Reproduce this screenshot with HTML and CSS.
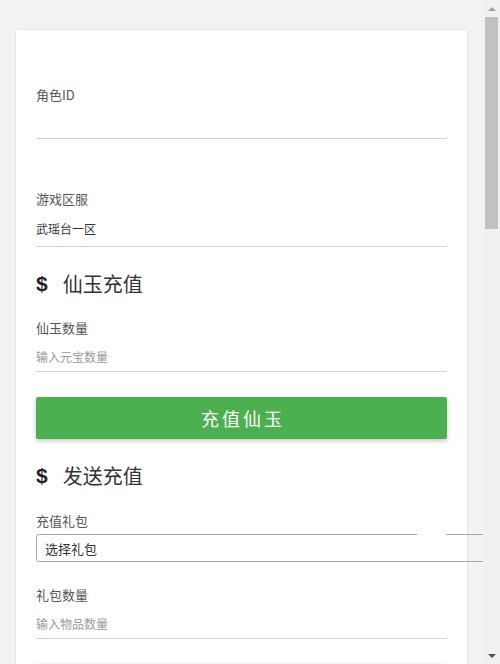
FILE: index.html
```html
<!DOCTYPE html>
<html lang="zh-CN">
<head>
<meta charset="utf-8">
<title>充值</title>
<link rel="stylesheet" href="styles.css">
</head>
<body>
<div class="page">
  <main class="viewport">
    <div class="card">
      <div class="field first">
        <label class="label">角色ID</label>
        <div class="line-input"></div>
      </div>
      <div class="field server">
        <label class="label">游戏区服</label>
        <div class="line-input tall">武瑶台一区</div>
      </div>

      <h2 class="heading"><span class="dollar">$</span>仙玉充值</h2>
      <div class="field jade">
        <label class="label">仙玉数量</label>
        <div class="line-input placeholder">输入元宝数量</div>
      </div>
      <button class="btn">充值仙玉</button>

      <h2 class="heading"><span class="dollar">$</span>发送充值</h2>
      <div class="field gift">
        <label class="label">充值礼包</label>
        <div class="select"><span class="select-text">选择礼包</span><span class="notch"></span></div>
      </div>
      <div class="field gift-count">
        <label class="label">礼包数量</label>
        <div class="line-input placeholder">输入物品数量</div>
      </div>
      <div class="btn btn-next"></div>
    </div>
  </main>
  <div class="scrollbar">
    <div class="sb-btn"><span class="arrow-up"></span></div>
    <div class="sb-thumb"></div>
    <div class="sb-track"></div>
    <div class="sb-btn"><span class="arrow-down"></span></div>
  </div>
</div>
</body>
</html>
```
FILE: styles.css
```css
html, body {
  margin: 0;
  padding: 0;
  height: 664px;
  overflow: hidden;
}
body {
  background: #f2f2f2;
  font-family: "Noto Sans CJK SC", "Noto Sans", sans-serif;
  color: #333;
}
.page {
  display: flex;
  height: 664px;
}
.viewport {
  width: 483px;
  height: 664px;
  overflow: hidden;
  padding: 30px 16px 0 16px;
  box-sizing: border-box;
}
.card {
  background: #fff;
  box-shadow: 0 0 2px rgba(0, 0, 0, 0.12);
  padding: 54px 20px 40px 20px;
}
.field {
  display: flex;
  flex-direction: column;
}
.server { margin-top: 49px; }
.jade { margin-top: 19px; }
.gift { margin-top: 20px; }
.gift-count { margin-top: 22px; }
.label {
  font-size: 13px;
  line-height: 18px;
  padding-top: 2px;
  color: #555;
}
.line-input {
  font-size: 12px;
  line-height: 16px;
  padding: 12px 0 6px 0;
  height: 16px;
  border-bottom: 1px solid #d2d2d2;
  color: #333;
}
.line-input.tall {
  padding: 13px 0 9px 0;
}
.line-input.placeholder {
  color: #9a9a9a;
}
.heading {
  margin: 23px 0 0 0;
  font-size: 20px;
  line-height: 28px;
  font-weight: normal;
  color: #333;
  display: flex;
  align-items: center;
}
.dollar {
  font-family: "Liberation Sans", Arial, sans-serif;
  font-weight: bold;
  font-size: 21px;
  color: #222;
  margin-right: 15px;
}
.btn {
  display: block;
  box-sizing: border-box;
  width: 100%;
  height: 42px;
  margin-top: 25px;
  border: none;
  border-radius: 2px;
  background: #4caf50;
  color: #fff;
  font-family: "Noto Sans CJK SC", sans-serif;
  font-size: 18px;
  letter-spacing: 3px;
  padding: 0 0 0 3px;
  box-shadow: 0 2px 5px rgba(0, 0, 0, 0.22);
}
.select {
  position: relative;
  margin-top: 4px;
  width: 470px;
  height: 26px;
  border: 1px solid #a9a9a9;
  border-radius: 3px;
  display: flex;
  align-items: center;
  padding-left: 8px;
  box-sizing: content-box;
}
.select-text {
  font-size: 13px;
  line-height: 18px;
  padding-top: 1px;
  color: #333;
}
.notch {
  position: absolute;
  top: -1px;
  left: 380px;
  width: 29px;
  height: 1px;
  background: #fff;
}
.scrollbar {
  width: 17px;
  height: 664px;
  background: #f1f1f1;
  display: flex;
  flex-direction: column;
}
.sb-btn {
  height: 17px;
  display: flex;
  align-items: center;
  justify-content: center;
}
.arrow-up {
  width: 0;
  height: 0;
  border-left: 4px solid transparent;
  border-right: 4px solid transparent;
  border-bottom: 4px solid #a3a3a3;
}
.arrow-down {
  width: 0;
  height: 0;
  border-left: 4px solid transparent;
  border-right: 4px solid transparent;
  border-top: 4px solid #505050;
}
.sb-thumb {
  height: 212px;
  margin: 0 2px;
  background: #c1c1c1;
}
.sb-track {
  flex: 1;
}
```
